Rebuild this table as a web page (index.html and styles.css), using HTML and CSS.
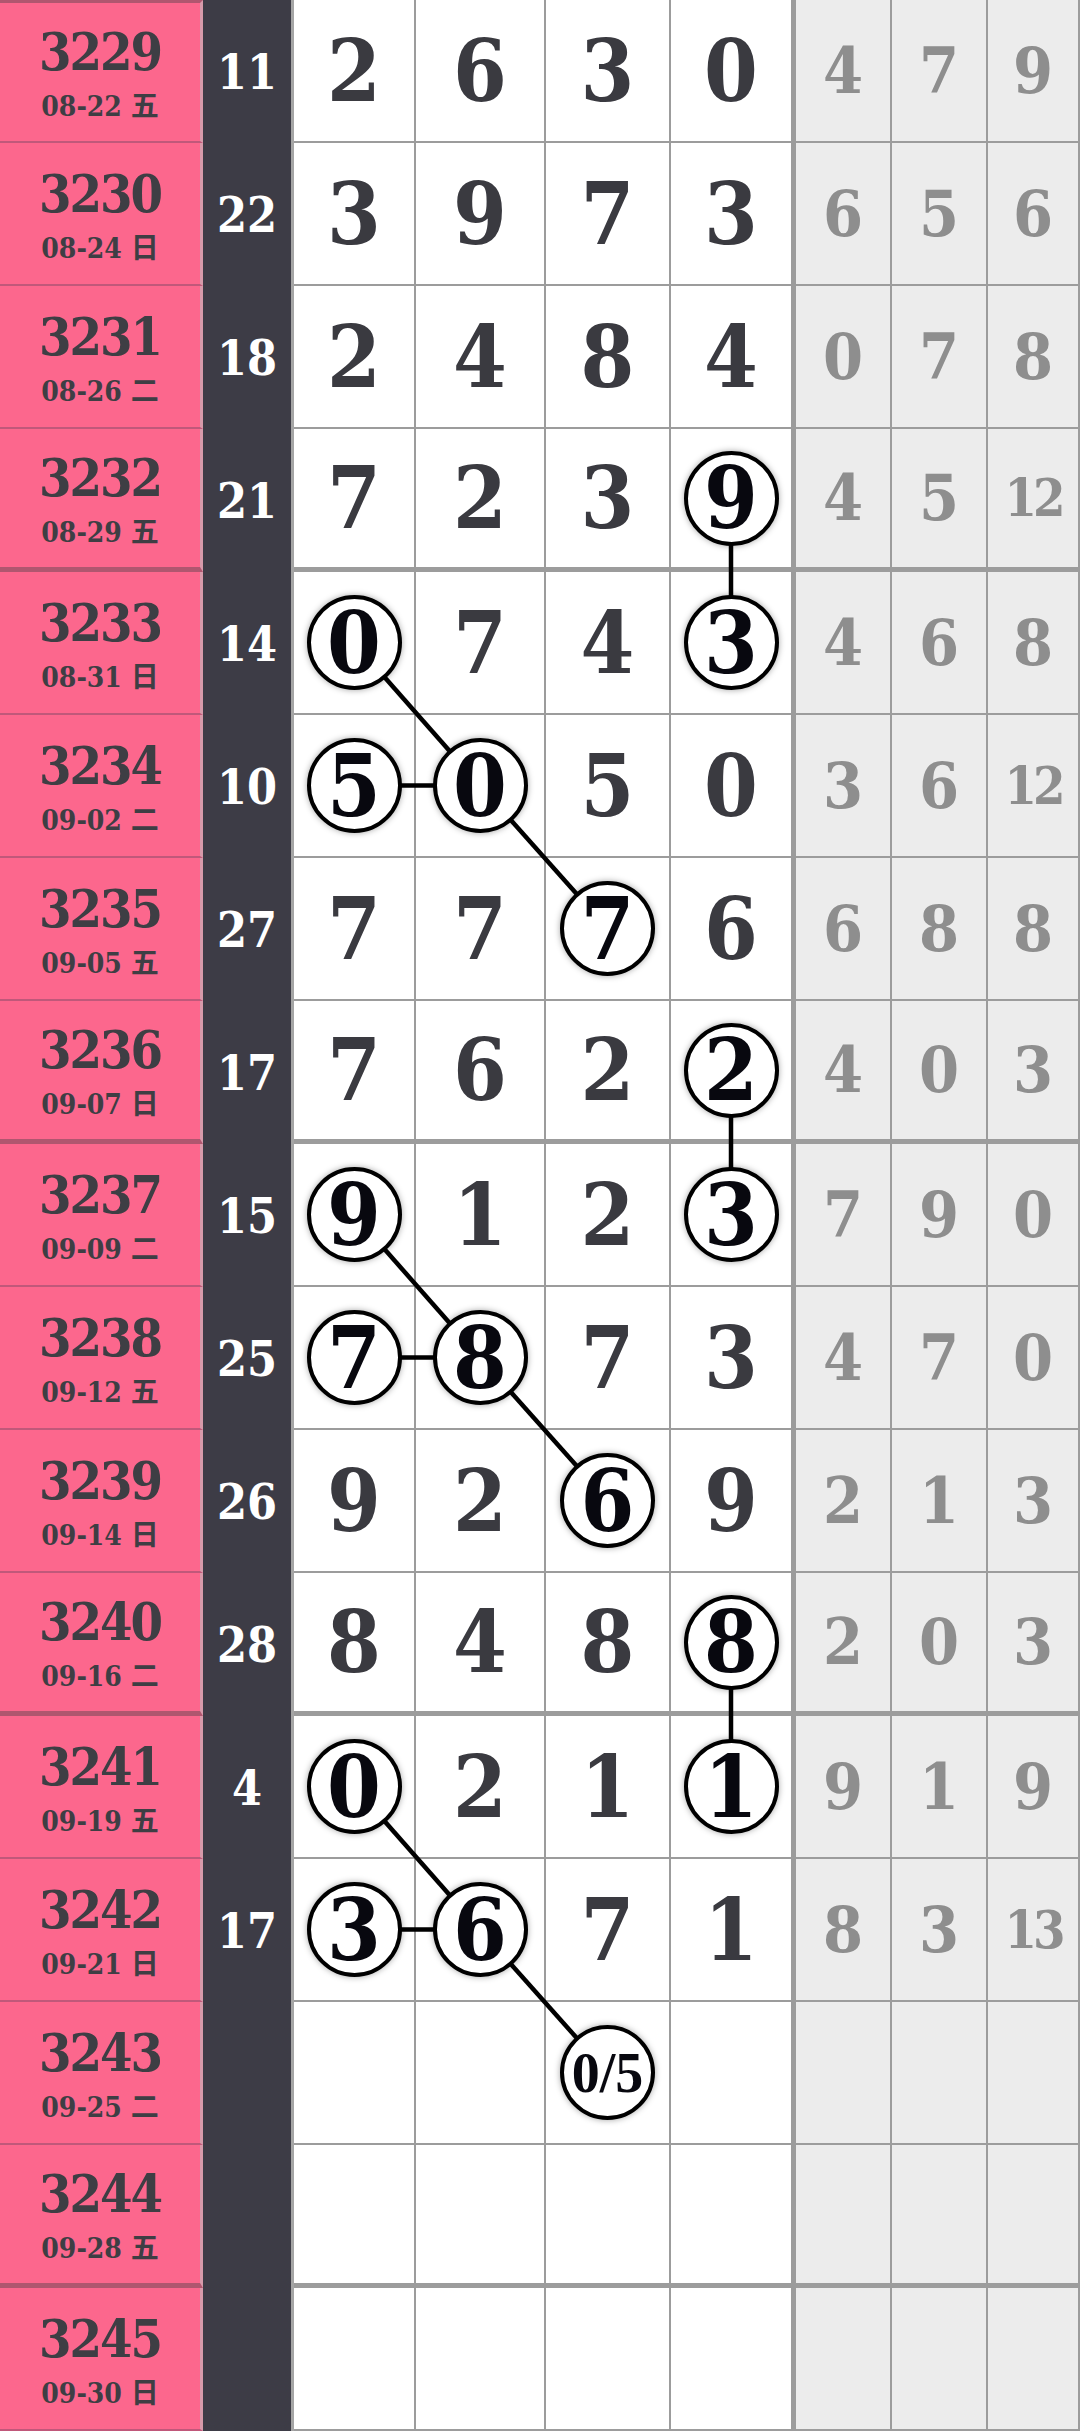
FILE: index.html
```html
<!DOCTYPE html>
<html lang="zh">
<head>
    <meta charset="UTF-8">
    <meta name="viewport" content="width=device-width, initial-scale=1.0">
    <title>走势图</title>
    <link rel="stylesheet" href="styles.css">
</head>
<body>
    <div id="chart" class="chart">
        <svg id="links" class="links"></svg>
    </div>
    <script>
        // 期号, 日期, 和值, 号码, 右侧三列, 圈出的号码位置
        const rows = [
            ["3229", "08-22 五", "11", ["2", "6", "3", "0"], ["4", "7", "9"], []],
            ["3230", "08-24 日", "22", ["3", "9", "7", "3"], ["6", "5", "6"], []],
            ["3231", "08-26 二", "18", ["2", "4", "8", "4"], ["0", "7", "8"], []],
            ["3232", "08-29 五", "21", ["7", "2", "3", "9"], ["4", "5", "12"], [3]],
            ["3233", "08-31 日", "14", ["0", "7", "4", "3"], ["4", "6", "8"], [0, 3]],
            ["3234", "09-02 二", "10", ["5", "0", "5", "0"], ["3", "6", "12"], [0, 1]],
            ["3235", "09-05 五", "27", ["7", "7", "7", "6"], ["6", "8", "8"], [2]],
            ["3236", "09-07 日", "17", ["7", "6", "2", "2"], ["4", "0", "3"], [3]],
            ["3237", "09-09 二", "15", ["9", "1", "2", "3"], ["7", "9", "0"], [0, 3]],
            ["3238", "09-12 五", "25", ["7", "8", "7", "3"], ["4", "7", "0"], [0, 1]],
            ["3239", "09-14 日", "26", ["9", "2", "6", "9"], ["2", "1", "3"], [2]],
            ["3240", "09-16 二", "28", ["8", "4", "8", "8"], ["2", "0", "3"], [3]],
            ["3241", "09-19 五", "4", ["0", "2", "1", "1"], ["9", "1", "9"], [0, 3]],
            ["3242", "09-21 日", "17", ["3", "6", "7", "1"], ["8", "3", "13"], [0, 1]],
            ["3243", "09-25 二", "", ["", "", "0/5", ""], ["", "", ""], [2]],
            ["3244", "09-28 五", "", ["", "", "", ""], ["", "", ""], []],
            ["3245", "09-30 日", "", ["", "", "", ""], ["", "", ""], []]
        ];

        // [起始行, 起始列, 结束行, 结束列]
        const links = [
            [3, 3, 4, 3],
            [4, 0, 5, 1], [5, 0, 5, 1], [5, 1, 6, 2],
            [7, 3, 8, 3],
            [8, 0, 9, 1], [9, 0, 9, 1], [9, 1, 10, 2],
            [11, 3, 12, 3],
            [12, 0, 13, 1], [13, 0, 13, 1], [13, 1, 14, 2]
        ];

        function buildRows() {
            const chart = document.getElementById("chart");
            const svg = document.getElementById("links");
            rows.forEach((item, r) => {
                const row = document.createElement("div");
                row.className = r % 4 === 3 ? "row group-end" : "row";
                let html = `
                    <div class="cell issue">
                        <span class="no">${item[0]}</span>
                        <span class="date">${item[1]}</span>
                    </div>
                    <div class="cell sum">${item[2]}</div>
                `;
                item[3].forEach((num, c) => {
                    const last = c === 3 ? " last" : "";
                    if (item[5].includes(c)) {
                        const small = num.length > 1 ? " ball-small" : "";
                        html += `<div class="cell num${last}"><span class="ball${small}" id="ball-${r}-${c}">${num}</span></div>`;
                    } else {
                        html += `<div class="cell num${last}">${num}</div>`;
                    }
                });
                item[4].forEach(num => {
                    const two = num.length > 1 ? " two" : "";
                    html += `<div class="cell grey${two}">${num}</div>`;
                });
                row.innerHTML = html;
                chart.insertBefore(row, svg);
            });
        }

        function center(id, box) {
            const rect = document.getElementById(id).getBoundingClientRect();
            return [rect.left + rect.width / 2 - box.left, rect.top + rect.height / 2 - box.top];
        }

        function drawLinks() {
            const svg = document.getElementById("links");
            const box = document.getElementById("chart").getBoundingClientRect();
            svg.setAttribute("width", box.width);
            svg.setAttribute("height", box.height);
            links.forEach(([r1, c1, r2, c2]) => {
                const a = center(`ball-${r1}-${c1}`, box);
                const b = center(`ball-${r2}-${c2}`, box);
                const line = document.createElementNS("http://www.w3.org/2000/svg", "line");
                line.setAttribute("x1", a[0]);
                line.setAttribute("y1", a[1]);
                line.setAttribute("x2", b[0]);
                line.setAttribute("y2", b[1]);
                svg.appendChild(line);
            });
        }

        buildRows();
        drawLinks();
    </script>
</body>
</html>
```

FILE: styles.css
```css
body {
    margin: 0;
    background-color: #fff;
    font-family: "DejaVu Serif", "Noto Sans CJK SC", serif;
}
.chart {
    position: relative;
    width: 1080px;
}
.row {
    display: grid;
    grid-template-columns: 203px 91px 122px 130px 125px 125px 96px 96px 92px;
    height: 143px;
}
.cell {
    box-sizing: border-box;
    display: flex;
    align-items: center;
    justify-content: center;
    border-bottom: 2px solid #9c9c9c;
    border-right: 2px solid #9c9c9c;
    line-height: 1;
}
.group-end .cell {
    border-bottom-width: 5px;
}
.issue {
    flex-direction: column;
    gap: 12px;
    padding-top: 2px;
    background-color: #fc678d;
    color: #3e3e44;
    border-bottom-color: #c0587a;
    border-right: 3px solid #d79aaa;
}
.group-end .issue {
    border-bottom-color: #b0566f;
}
.row:first-of-type .issue {
    border-top: 3px solid #b0566f;
}
.issue .no {
    font-size: 52px;
    font-weight: bold;
    font-stretch: condensed;
    letter-spacing: -2px;
    line-height: 56px;
}
.issue .date {
    font-size: 28px;
    font-weight: bold;
    font-stretch: condensed;
    line-height: 30px;
}
.sum {
    background-color: #3d3c46;
    color: #fff;
    font-size: 48px;
    font-weight: bold;
    font-stretch: condensed;
    border-bottom: none;
    border-right: 3px solid #a5a5a5;
}
.num {
    background-color: #fff;
    color: #3a3a40;
    font-size: 86px;
    font-weight: bold;
    font-stretch: condensed;
}
.num.last {
    border-right-width: 5px;
}
.grey {
    background-color: #ececec;
    color: #8e8e8e;
    font-size: 64px;
    font-weight: bold;
    font-stretch: condensed;
}
.grey.two {
    font-size: 52px;
    letter-spacing: -4px;
}
.ball {
    position: relative;
    z-index: 2;
    box-sizing: border-box;
    display: flex;
    align-items: center;
    justify-content: center;
    width: 95px;
    height: 95px;
    border: 4.5px solid #000;
    border-radius: 50%;
    background-color: #fff;
    color: #08080f;
    box-shadow: 0 0 6px rgba(0, 0, 0, 0.35);
}
.ball-small {
    font-family: "Liberation Serif", serif;
    font-size: 56px;
}
.links {
    position: absolute;
    top: 0;
    left: 0;
    z-index: 1;
    pointer-events: none;
}
.links line {
    stroke: #000;
    stroke-width: 4.5;
}
```
